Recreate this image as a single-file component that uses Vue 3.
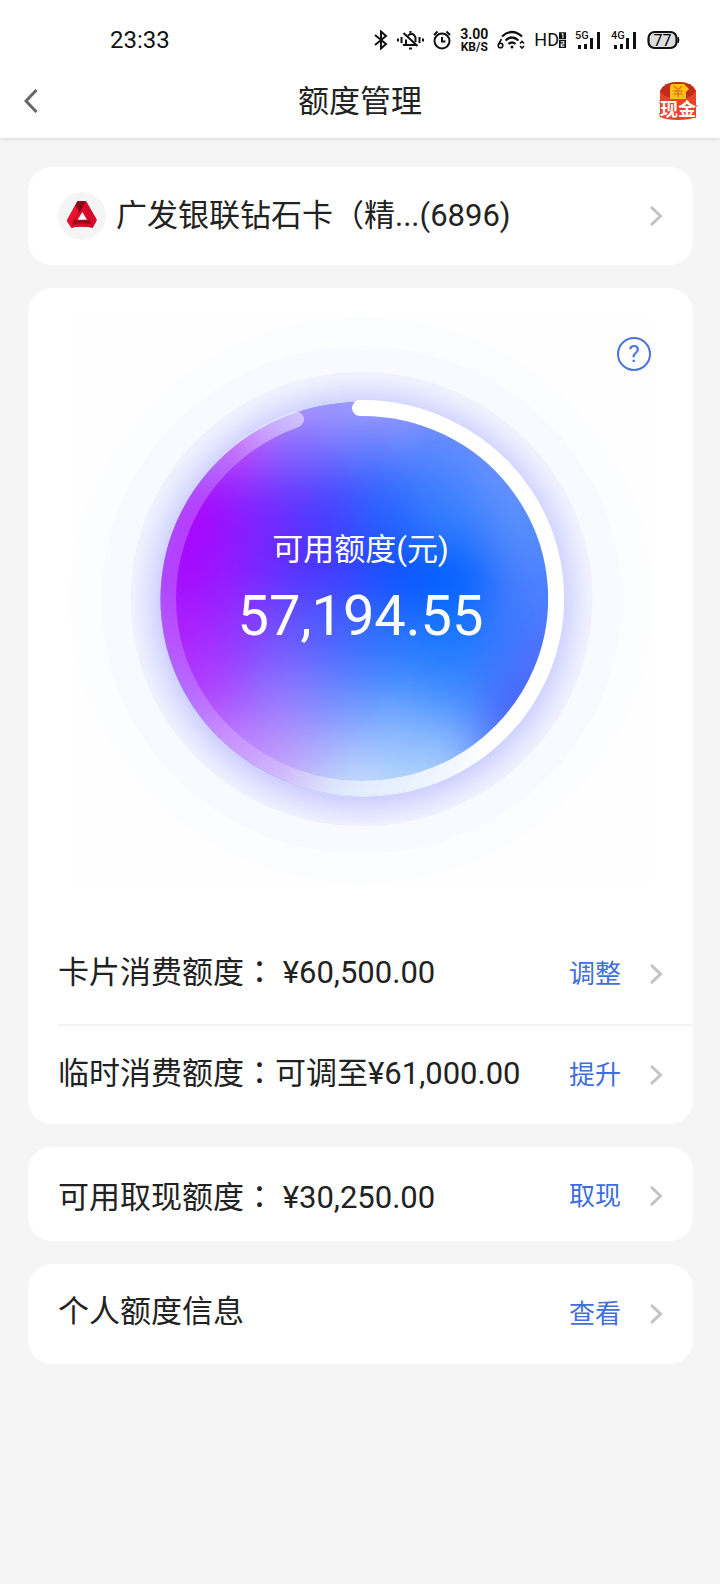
<script setup>
const groups = [
  [{ id: 'cash', label: '可用取现额度', amount: '¥30,250.00', action: '取现' }],
  [{ id: 'info', label: '个人额度信息', action: '查看' }],
]
const limits = [
  { id: 'card', label: '卡片消费额度', amount: '¥60,500.00', action: '调整' },
  { id: 'temp', label: '临时消费额度', note: '可调至', amount: '¥61,000.00', action: '提升' },
]

// Colour patches blurred together into the dial's gradient: x, y, radius, colour
const patches = [
  [362, 395, 62, '#a09cff'], [262, 400, 48, '#c0a0ff'], [460, 410, 46, '#8896ff'],
  [232, 448, 34, '#c440fa'], [300, 455, 36, '#8064ff'], [368, 463, 36, '#5a78ff'], [440, 463, 42, '#5286ff'], [515, 470, 46, '#6a92ff'],
  [195, 515, 44, '#ac04ff'], [262, 512, 36, '#7c22ff'], [325, 510, 36, '#4a3cff'], [385, 510, 34, '#2562ff'], [450, 515, 36, '#3580ff'], [530, 530, 40, '#5590fa'],
  [180, 575, 44, '#aa04ff'], [232, 575, 34, '#941aff'], [288, 570, 34, '#622aff'], [340, 570, 34, '#3e38ff'], [400, 573, 36, '#0c50ff'], [455, 582, 38, '#0060ff'], [538, 590, 38, '#4c80ff'],
  [180, 640, 44, '#b01cff'], [238, 632, 34, '#9432ff'], [288, 640, 32, '#7052ff'], [335, 638, 32, '#4a5cff'], [385, 640, 34, '#2a70ff'], [450, 640, 38, '#1678ff'], [510, 645, 34, '#3878ff'], [560, 665, 36, '#5e6cff'],
  [205, 695, 42, '#b240ff'], [280, 692, 34, '#9474ff'], [335, 690, 32, '#6c86ff'], [395, 692, 34, '#4b92ff'], [455, 695, 34, '#3e8cff'], [520, 715, 40, '#4a68fa'],
  [225, 755, 42, '#c47cff'], [282, 745, 36, '#b88cfc'], [335, 745, 34, '#a0acff'], [395, 740, 36, '#90bcff'], [450, 748, 34, '#8abaff'],
  [285, 805, 46, '#d2b4f8'], [360, 810, 52, '#c6e0fc'], [435, 808, 46, '#bcdcfa'],
]
</script>

<template>
  <div class="page">
    <div class="status">
      <span class="time">23:33</span>
      <div class="status-icons">
        <svg width="14" height="20" viewBox="0 0 14 20" fill="none" stroke="#111" stroke-width="2"><path d="M1 5 L12 14 L7 18.500 V1.500 L12 6 L1 15" /></svg>
        <svg width="27" height="20" viewBox="0 0 27 20" fill="none" stroke="#111" stroke-width="2">
          <path d="M1 8.500v3M4.500 7v6M22.500 7v6M26 8.500v3M6 15h14M9 14.500V9.500M11 5.500q5-4 7.500 2V12M6.500 3l14 13M13.500 1v2.500M12 18.500h3" />
        </svg>
        <svg width="18" height="20" viewBox="0 0 18 20" fill="none" stroke="#111" stroke-width="2">
          <circle cx="9" cy="11" r="7.500" /><path d="M9 7v4.500h3.500M1 5l3.500-3.500M17 5l-3.500-3.500" />
        </svg>
        <span class="speed"><b>3.00</b><small>KB/S</small></span>
        <svg width="28" height="20" viewBox="0 0 28 20" fill="none" stroke="#111" stroke-width="2.200">
          <path d="M5 6.500q10-9 20 0M8.500 10.500q6.500-6 13 0M11.500 14q3.500-3 7 0" />
          <circle cx="15" cy="17" r="1.500" fill="#111" stroke="none" />
          <circle cx="3.500" cy="15.500" r="2.300" stroke-width="1.600" /><path d="M4.500 9L1.500 14.500" stroke-width="1.600" />
          <path d="M23 13.500l2-2 2 2M23 16l2 2 2-2" stroke-width="1.600" />
        </svg>
        <span class="hd">HD
          <svg width="7" height="18" viewBox="0 0 8 18"><path d="M0 0h8v8H0zM0 9h8v9H0z" fill="#111" /><path d="M3 2h1.500v5M2 11h3.500v2.500H2.500V16H6" fill="none" stroke="#fff" stroke-width="1.200" /></svg>
        </span>
        <svg v-for="net in ['5G', '4G']" :key="net" width="27" height="20" viewBox="0 0 27 20" fill="#111">
          <text x="0" y="9" class="net">{{ net }}</text>
          <path d="M3 15h3v4H3zM9 14h3v5H9zM15 8h3v11h-3zM22 2h3v17h-3z" />
        </svg>
        <svg width="33" height="20" viewBox="0 0 33 20">
          <rect x="1.500" y="2" width="28" height="16" rx="6" fill="#ddd" stroke="#111" stroke-width="2.200" />
          <path d="M31 7q2 3 0 6z" fill="#111" stroke="#111" />
          <text x="15.500" y="15.500" text-anchor="middle" class="level">77</text>
        </svg>
      </div>
    </div>

    <header class="bar">
      <button class="back" aria-label="返回">
        <svg width="14" height="24" viewBox="0 0 14 24" fill="none" stroke="#666" stroke-width="3"><path d="M12.500 1L2 12l10.500 11" /></svg>
      </button>
      <h1>额度管理</h1>
      <button class="promo" aria-label="现金">
        <svg width="40" height="40" viewBox="0 0 40 40">
          <path d="M2 10Q6 1 20 1t18 9v26q-6 3-18 3T2 36z" fill="#e8432c" />
          <path d="M2 10Q6 1 20 1t18 9q-2 11-18 11T2 10z" fill="#c22c1b" />
          <path d="M2 10q5 8 18 8t18-8v12H2z" fill="#e8432c" />
          <path d="M12 6q0-3 3-3h11l5 5-3 3v7H12z" fill="#fbc21b" />
          <path d="M16 5l4 4 4-4M15.500 10h9M15.500 13h9M20 9v7" fill="none" stroke="#e87812" stroke-width="1.500" />
          <text x="20" y="35" text-anchor="middle" class="promo-text">现金</text>
        </svg>
      </button>
    </header>

    <main>
      <button class="card account">
        <svg class="logo" width="48" height="48" viewBox="0 0 144 144">
          <circle cx="72" cy="72" r="72" fill="#f5f5f5" />
          <path d="M58 28h26l31 54q2 4-1 8l-10 17q-32-7-64 0L28 89q-2-4 1-8z" fill="#dc0b2c" />
          <path d="M58 28h26L72 50 62 64 52 42z" fill="#8b0713" />
          <path d="M52 40L63 56 44 90 40 106 28 89q-2-4 1-8z" fill="#e8102f" />
          <path d="M84 28L72 50l16 34 16 22 10-17q2-4 1-8z" fill="#d60a29" />
          <path d="M47 84h48l10 22q-32-7-64 0z" fill="#9c0716" />
          <path d="M40 106l6-9q26-6 52 0l6 10q-32-7-64 0z" fill="#dd0b2b" />
          <path d="M73 60L59 83h28z" fill="#fff" />
        </svg>
        <span class="name">广发银联钻石卡（精...(6896)</span>
        <svg class="arrow" width="14" height="20" viewBox="0 0 14 20"><path d="M2 1l9.500 9L2 19" /></svg>
      </button>

      <section class="card">
        <div class="gauge">
          <svg class="dial" viewBox="28 288 665 636" aria-hidden="true">
            <defs>
              <clipPath id="disc"><ellipse cx="361.500" cy="599" rx="201" ry="197" /></clipPath>
              <filter id="soft" filterUnits="userSpaceOnUse" x="60" y="300" width="600" height="600" color-interpolation-filters="sRGB"><feGaussianBlur stdDeviation="23" /></filter>
              <filter id="halo" x="-30%" y="-30%" width="160%" height="160%" color-interpolation-filters="sRGB"><feGaussianBlur stdDeviation="18" /></filter>
              <linearGradient id="upper" gradientUnits="userSpaceOnUse" x1="160" y1="0" x2="304" y2="0">
                <stop offset="0" stop-color="#fff" stop-opacity=".2" />
                <stop offset=".5" stop-color="#fff" stop-opacity=".22" />
                <stop offset="1" stop-color="#fff" stop-opacity=".5" />
              </linearGradient>
              <linearGradient id="lower" gradientUnits="userSpaceOnUse" x1="160" y1="0" x2="564" y2="0">
                <stop offset="0" stop-color="#fff" stop-opacity=".2" />
                <stop offset=".3" stop-color="#fff" stop-opacity=".2" />
                <stop offset=".5" stop-color="#fff" stop-opacity=".55" />
                <stop offset=".68" stop-color="#fff" stop-opacity=".8" />
                <stop offset=".8" stop-color="#fff" />
              </linearGradient>
              <mask id="track" maskUnits="userSpaceOnUse" x="28" y="288" width="665" height="636">
                <path d="M360 408 A194 190.500 0 1 1 296 419.400" fill="none" stroke="#fff" stroke-width="16" stroke-linecap="round" />
              </mask>
              <clipPath id="inner-halo"><ellipse cx="361.500" cy="599" rx="231" ry="227" /></clipPath>
            </defs>

            <rect x="72" y="317" width="580" height="567" fill="#fefefe" />
            <ellipse cx="361.500" cy="600" rx="291" ry="283" fill="#fcfdff" />
            <ellipse cx="361.500" cy="600" rx="260" ry="254" fill="#f9faff" />
            <ellipse cx="361.500" cy="599" rx="231" ry="227" fill="#f6f7ff" />
            <g clip-path="url(#inner-halo)">
              <ellipse cx="361.500" cy="601" rx="208" ry="205" fill="#babeff" filter="url(#halo)" />
            </g>

            <g clip-path="url(#disc)">
              <rect x="150" y="390" width="424" height="420" fill="#4d7cff" />
              <g filter="url(#soft)">
                <circle v-for="([x, y, r, color], i) in patches" :key="i" :cx="x" :cy="y" :r="r" :fill="color" />
              </g>
            </g>

            <g mask="url(#track)">
              <rect x="340" y="390" width="240" height="209" fill="#fff" />
              <rect x="150" y="390" width="180" height="209" fill="url(#upper)" />
              <rect x="150" y="599" width="430" height="220" fill="url(#lower)" />
            </g>
          </svg>
          <div class="readout">
            <span class="caption">可用额度(元)</span>
            <strong>57,194.55</strong>
          </div>
          <button class="help" aria-label="帮助">?</button>
        </div>

        <div v-for="row in limits" :key="row.id" class="row limit">
          <span class="label">{{ row.label }}<i class="colon">：</i><template v-if="row.note">{{ row.note }}</template><template v-else>&nbsp;</template>{{ row.amount }}</span>
          <button class="action">{{ row.action }}
            <svg class="arrow" width="14" height="20" viewBox="0 0 14 20"><path d="M2 1l9.500 9L2 19" /></svg>
          </button>
        </div>
      </section>

      <section v-for="(rows, i) in groups" :key="i" class="card">
        <div v-for="row in rows" :key="row.id" class="row" :class="{ compact: row.amount }">
          <span class="label">{{ row.label }}<template v-if="row.amount"><i class="colon">：</i>&nbsp;{{ row.amount }}</template></span>
          <button class="action">{{ row.action }}
            <svg class="arrow" width="14" height="20" viewBox="0 0 14 20"><path d="M2 1l9.500 9L2 19" /></svg>
          </button>
        </div>
      </section>
    </main>
  </div>
</template>

<style>
body {
  background: #f5f5f5;
}
</style>

<style scoped>
.page {
  min-height: 100vh;
  background: #f5f5f5;
  color: #222;
  font-family: Roboto, "Noto Sans CJK SC", sans-serif;
  font-size: 31px;
}
button {
  margin: 0;
  padding: 0;
  border: 0;
  background: none;
  color: inherit;
  font: inherit;
  cursor: pointer;
}
svg {
  display: block;
  flex: none;
}
.status {
  position: relative;
  z-index: 1;
  display: flex;
  align-items: center;
  justify-content: space-between;
  height: 48px;
  padding: 16px 40px 0 110px;
  background: #fff;
  color: #111;
}
.time {
  font-size: 24px;
}
.status-icons {
  display: flex;
  align-items: center;
  gap: 9px;
}
.speed {
  display: flex;
  flex-direction: column;
  align-items: center;
}
.speed b {
  font-size: 14px;
  font-weight: 700;
  line-height: 14px;
}
.speed small {
  font-size: 12px;
  font-weight: 700;
  line-height: 12px;
}
.hd {
  display: flex;
  align-items: center;
  font-size: 18px;
  line-height: 20px;
}
.net {
  font-size: 11px;
  font-weight: 500;
}
.level {
  font-size: 16px;
}
.bar {
  display: grid;
  grid-template-columns: 48px 1fr 48px;
  align-items: center;
  height: 74px;
  padding: 0 22px;
  background: #fff;
  box-shadow: 0 1px 4px rgba(0, 0, 0, 0.12);
}
.bar h1 {
  margin: 0;
  padding-top: 2px;
  font-size: 31px;
  font-weight: 400;
  line-height: 44px;
  text-align: center;
}
.back {
  justify-self: start;
  padding: 8px 2px;
}
.promo {
  justify-self: end;
}
.promo-text {
  fill: #fff;
  stroke: #e8432c;
  stroke-width: 2px;
  paint-order: stroke;
  font-size: 18px;
  font-weight: 700;
}
main {
  display: flex;
  flex-direction: column;
  gap: 23px;
  padding: 29px 27px 29px 28px;
}
.card {
  border-radius: 24px;
  background: #fff;
}
.account {
  display: flex;
  align-items: center;
  gap: 10px;
  height: 98px;
  padding: 0 30px;
  text-align: left;
}
.name {
  flex: 1;
  line-height: 44px;
}
.arrow {
  fill: none;
  stroke: #c4c4c4;
  stroke-width: 3px;
}
.gauge {
  position: relative;
  display: grid;
  justify-items: center;
}
.dial {
  grid-area: 1 / 1;
  width: 100%;
}
.readout {
  z-index: 1;
  grid-area: 1 / 1;
  align-self: center;
  display: flex;
  flex-direction: column;
  align-items: center;
  gap: 12px;
  padding-bottom: 36px;
  color: #fff;
}
.caption {
  line-height: 44px;
}
.readout strong {
  font-size: 56px;
  font-weight: 400;
  line-height: 64px;
}
.help {
  position: absolute;
  top: 49px;
  right: 42px;
  width: 34px;
  height: 34px;
  border: 2px solid #4a74dc;
  border-radius: 50%;
  color: #4a74dc;
  font-size: 24px;
  line-height: 30px;
}
.row {
  display: flex;
  align-items: center;
  justify-content: space-between;
  box-sizing: border-box;
  height: 100px;
  margin-left: 30px;
  padding-right: 30px;
}
.row + .row {
  border-top: 2px solid #f3f3f3;
}
.label {
  padding-bottom: 4px;
  line-height: 44px;
  white-space: nowrap;
}
.limit .label {
  padding-bottom: 6px;
}
.compact {
  height: 94px;
  padding-top: 4px;
}
.compact .label {
  padding-bottom: 0;
}
.colon {
  font-family: "Noto Sans CJK TC", sans-serif;
  font-style: normal;
}
.action {
  display: flex;
  align-items: center;
  gap: 28px;
  color: #3f6fdc;
  font-size: 26px;
  line-height: 40px;
}
</style>
